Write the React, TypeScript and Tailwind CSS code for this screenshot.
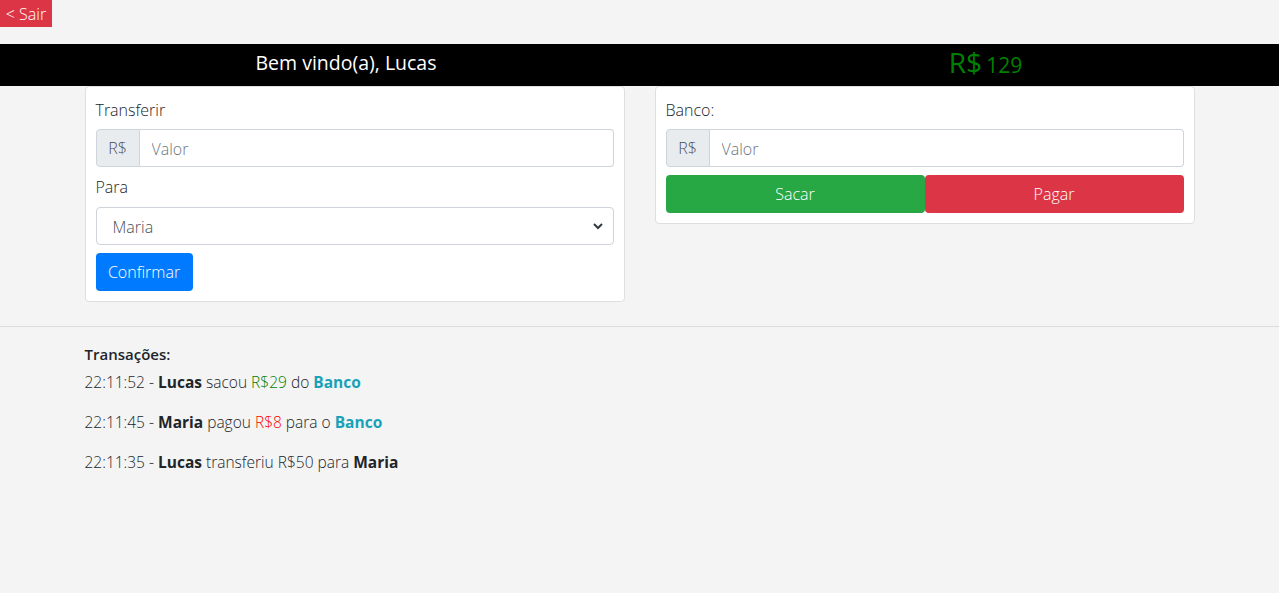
import { useState } from "react";

const font = { fontFamily: '"Open Sans", "Noto Sans", sans-serif' };

interface Transacao {
  hora: string;
  partes: React.ReactNode;
}

const transacoes: Transacao[] = [
  {
    hora: "22:11:52",
    partes: (
      <>
        <b className="font-bold">Lucas</b> sacou{" "}
        <span className="text-[#008000]">R$29</span> do{" "}
        <b className="font-bold text-[#17a2b8]">Banco</b>
      </>
    ),
  },
  {
    hora: "22:11:45",
    partes: (
      <>
        <b className="font-bold">Maria</b> pagou{" "}
        <span className="text-[#ff0000]">R$8</span> para o{" "}
        <b className="font-bold text-[#17a2b8]">Banco</b>
      </>
    ),
  },
  {
    hora: "22:11:35",
    partes: (
      <>
        <b className="font-bold">Lucas</b> transferiu R$50 para{" "}
        <b className="font-bold">Maria</b>
      </>
    ),
  },
];

function ValorInput() {
  return (
    <div className="flex h-[38px] w-full">
      <span className="flex w-[44px] items-center justify-center rounded-l-[4px] border border-[#ced4da] bg-[#e9ecef] text-[16px] font-light text-[#495057]">
        R$
      </span>
      <input
        placeholder="Valor"
        className="min-w-0 flex-1 rounded-r-[4px] border border-l-0 border-[#ced4da] bg-white px-3 pt-[2px] text-[16px] font-light text-[#495057] outline-none placeholder:text-[#6c757d]"
      />
    </div>
  );
}

export default function App() {
  const [destino, setDestino] = useState("Maria");

  return (
    <div className="min-h-[593px] bg-[#f4f4f4] text-[16px] text-[#212529]" style={font}>
      <button className="h-[27px] w-[52px] bg-[#dc3545] text-[16px] font-light leading-none text-white">
        &lt; Sair
      </button>

      {/* cabeçalho */}
      <div className="mt-[17px] flex h-[42px] items-center bg-black pb-[4px]">
        <div className="w-[692px] text-center text-[19.5px] text-white">Bem vindo(a), Lucas</div>
        <div className="flex-1 text-center text-[#008000]">
          <span className="text-[28px] leading-none">R$</span>{" "}
          <span className="text-[21px] leading-none">129</span>
        </div>
      </div>

      <div className="mx-auto flex w-[1110px] items-start justify-between">
        {/* transferir */}
        <div className="flex w-[540px] flex-col gap-2 rounded-[4px] border border-[#dfdfdf] bg-white p-[10px]">
          <label className="h-[24px] font-light leading-[26px]">Transferir</label>
          <ValorInput />
          <label className="h-[24px] font-light leading-[24px]">Para</label>
          <div className="relative h-[38px]">
            <select
              value={destino}
              onChange={(e) => setDestino(e.target.value)}
              className="h-full w-full appearance-none rounded-[4px] border border-[#ced4da] bg-white pl-4 pt-[2px] text-[16px] font-light text-[#495057] outline-none"
            >
              <option>Maria</option>
              <option>Lucas</option>
            </select>
            <svg
              className="pointer-events-none absolute right-[11px] top-[15px]"
              width="10"
              height="8"
              viewBox="0 0 10 8"
            >
              <path d="M1 2l4 4 4-4" fill="none" stroke="#343a40" strokeWidth="2" />
            </svg>
          </div>
          <div>
            <button className="h-[38px] w-[97px] rounded-[4px] bg-[#007bff] text-[16px] font-light text-white">
              Confirmar
            </button>
          </div>
        </div>

        {/* banco */}
        <div className="flex w-[540px] flex-col gap-2 rounded-[4px] border border-[#dfdfdf] bg-white p-[10px]">
          <label className="h-[24px] font-light leading-[26px]">Banco:</label>
          <ValorInput />
          <div className="flex h-[38px]">
            <button className="flex-1 rounded-[4px] bg-[#28a745] text-[16px] font-light text-white">
              Sacar
            </button>
            <button className="flex-1 rounded-[4px] bg-[#dc3545] text-[16px] font-light text-white">
              Pagar
            </button>
          </div>
        </div>
      </div>

      <hr className="mt-[24px] border-t border-[#dcdcdc]" />

      {/* transações */}
      <div className="mx-auto w-[1110px] pt-[15px]">
        <div className="h-[24px] text-[15px] font-semibold leading-[24px]">Transações:</div>
        <div className="mt-[4px]">
          {transacoes.map((t) => (
            <p key={t.hora} className="mb-4 text-[15.5px] font-light leading-[24px]">
              {t.hora} - {t.partes}
            </p>
          ))}
        </div>
      </div>
    </div>
  );
}
